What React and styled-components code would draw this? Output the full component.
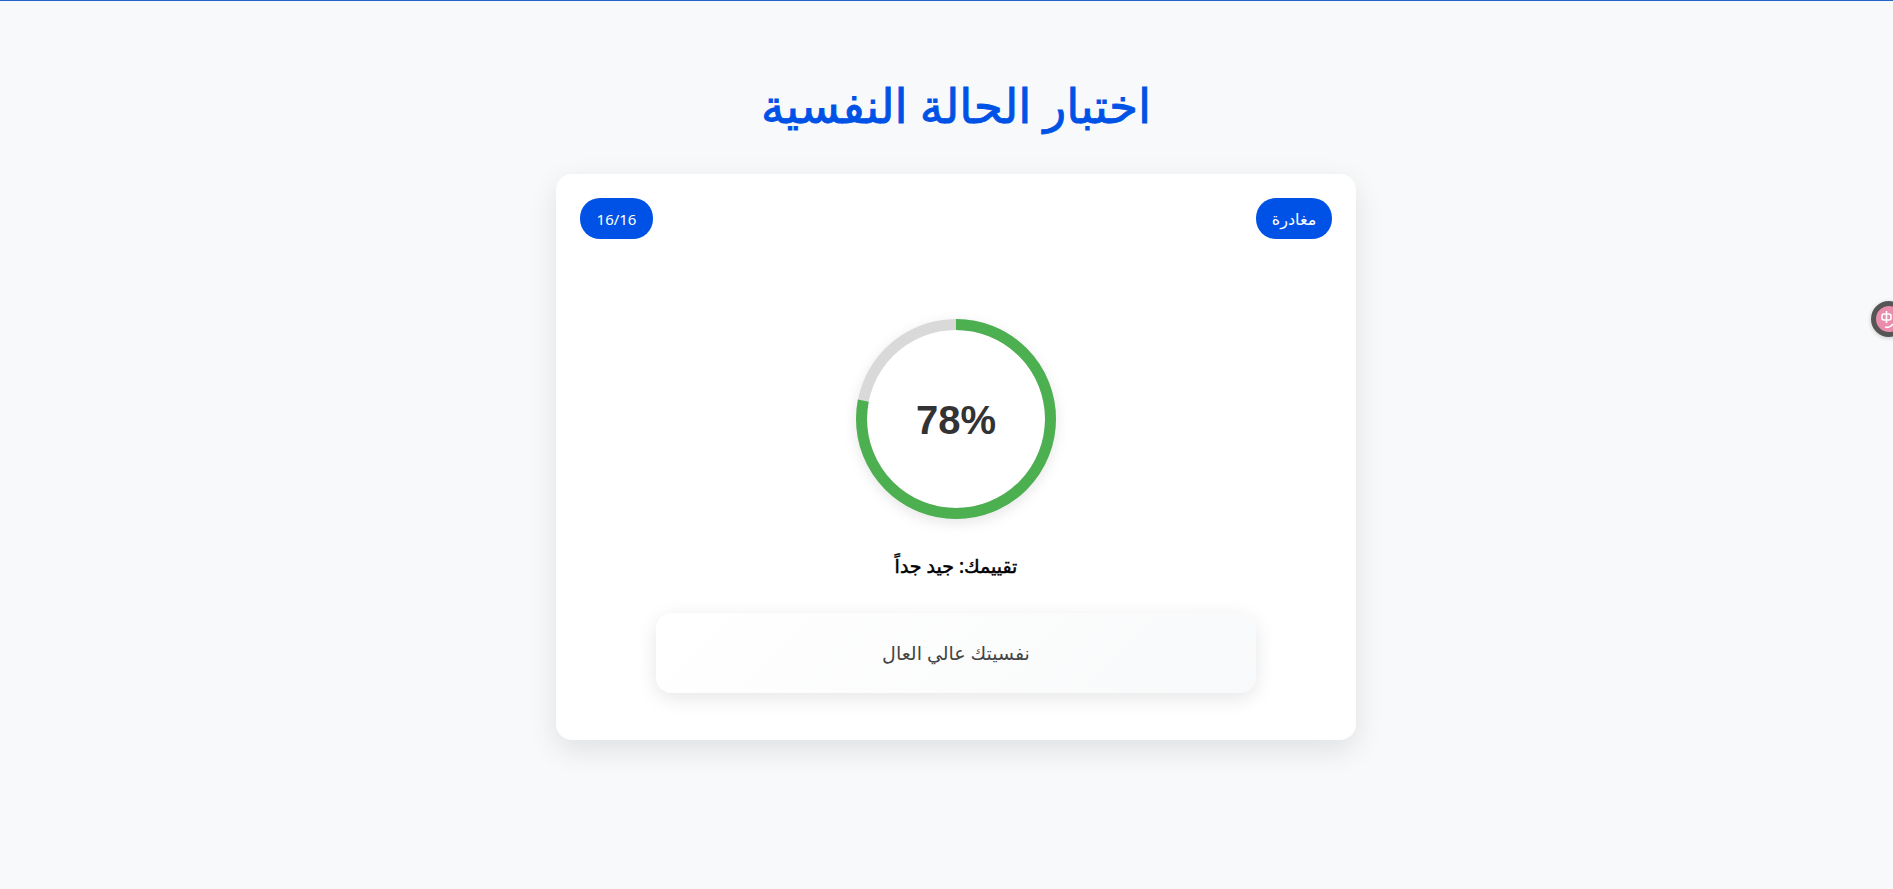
import React from 'react';
import styled, { createGlobalStyle } from 'styled-components';

const GlobalStyle = createGlobalStyle`
  html, body {
    margin: 0;
    padding: 0;
    background: #f8f9fa;
    overflow: hidden;
  }
`;

const Page = styled.div`
  position: relative;
  box-sizing: border-box;
  height: 889px;
  border-top: 1px solid #2563c9;
  padding: 79px 0 0 19px;
  direction: rtl;
  font-family: "Noto Sans", "DejaVu Sans", sans-serif;
  overflow: hidden;
`;

const Title = styled.h1`
  margin: 0 0 40px;
  height: 54px;
  line-height: 50px;
  text-align: center;
  font-size: 47px;
  font-weight: 400;
  -webkit-text-stroke: 0.9px #0052e6;
  color: #0052e6;
`;

const Card = styled.main`
  box-sizing: border-box;
  width: 800px;
  height: 566px;
  margin: 0 auto;
  padding: 24px 24px 48px;
  background: #fff;
  border-radius: 16px;
  box-shadow: 0 10px 30px rgba(0, 0, 0, 0.1);
`;

const TopRow = styled.div`
  display: flex;
  justify-content: space-between;
`;

const Pill = styled.div`
  box-sizing: border-box;
  height: 41px;
  min-width: ${(p) => p.$width}px;
  display: flex;
  align-items: center;
  justify-content: center;
  background: #0052e6;
  color: #fff;
  border-radius: 20px;
  font-size: ${(p) => p.$size}px;
`;

const Result = styled.div`
  display: flex;
  flex-direction: column;
  align-items: center;
  margin-top: 80px;
`;

const Ring = styled.div`
  position: relative;
  width: 200px;
  height: 200px;
  border-radius: 50%;
  box-shadow: 0 4px 14px rgba(0, 0, 0, 0.1);
`;

const RingSvg = styled.svg`
  display: block;
  transform: rotate(-90deg);
`;

const Percent = styled.div`
  position: absolute;
  inset: 3px 0 0;
  display: flex;
  align-items: center;
  justify-content: center;
  direction: ltr;
  font-family: "Liberation Sans", Arial, sans-serif;
  font-size: 40px;
  font-weight: 700;
  color: #333;
`;

const Rating = styled.div`
  margin-top: 34px;
  height: 26px;
  line-height: 26px;
  font-size: 19px;
  font-weight: 400;
  -webkit-text-stroke: 0.5px #000;
  color: #000;
`;

const Message = styled.div`
  box-sizing: border-box;
  width: 600px;
  height: 80px;
  margin-top: 34px;
  display: flex;
  align-items: center;
  justify-content: center;
  border-radius: 16px;
  background: linear-gradient(135deg, #ffffff, #f8f9fa);
  box-shadow: 0 5px 20px rgba(0, 0, 0, 0.1);
  font-size: 19px;
  color: #444;
`;

const Widget = styled.div`
  position: absolute;
  left: 1871px;
  top: 300px;
  box-sizing: border-box;
  width: 36px;
  height: 36px;
  border: 5px solid #555;
  border-radius: 50%;
  background: #ea8cab;
  box-shadow: 0 1px 4px rgba(0, 0, 0, 0.2);
`;

const WidgetMark = styled.svg`
  display: block;
`;

const score = 78;
const radius = 94.5;
const circumference = 2 * Math.PI * radius;

export default function App() {
  return (
    <Page>
      <GlobalStyle />
      <Title>اختبار الحالة النفسية</Title>
      <Card>
        <TopRow>
          <Pill $width={76} $size={16}>مغادرة</Pill>
          <Pill $width={73} $size={15}>16/16</Pill>
        </TopRow>
        <Result>
          <Ring>
            <RingSvg width="200" height="200" viewBox="0 0 200 200">
              <circle cx="100" cy="100" r={radius} fill="none" stroke="#d9d9d9" strokeWidth="11" />
              <circle
                cx="100"
                cy="100"
                r={radius}
                fill="none"
                stroke="#4caf50"
                strokeWidth="11"
                strokeDasharray={circumference}
                strokeDashoffset={circumference * (1 - score / 100)}
              />
            </RingSvg>
            <Percent>{score}%</Percent>
          </Ring>
          <Rating>تقييمك: جيد جداً</Rating>
          <Message>نفسيتك عالي العال</Message>
        </Result>
      </Card>
      <Widget>
        <WidgetMark width="26" height="26" viewBox="0 0 26 26" fill="none" stroke="#fff" strokeWidth="1.6">
          <rect x="6" y="8" width="9" height="6" rx="2" />
          <path d="M10.5 5v12M9 21c3 1 6 0 8-3" />
        </WidgetMark>
      </Widget>
    </Page>
  );
}
